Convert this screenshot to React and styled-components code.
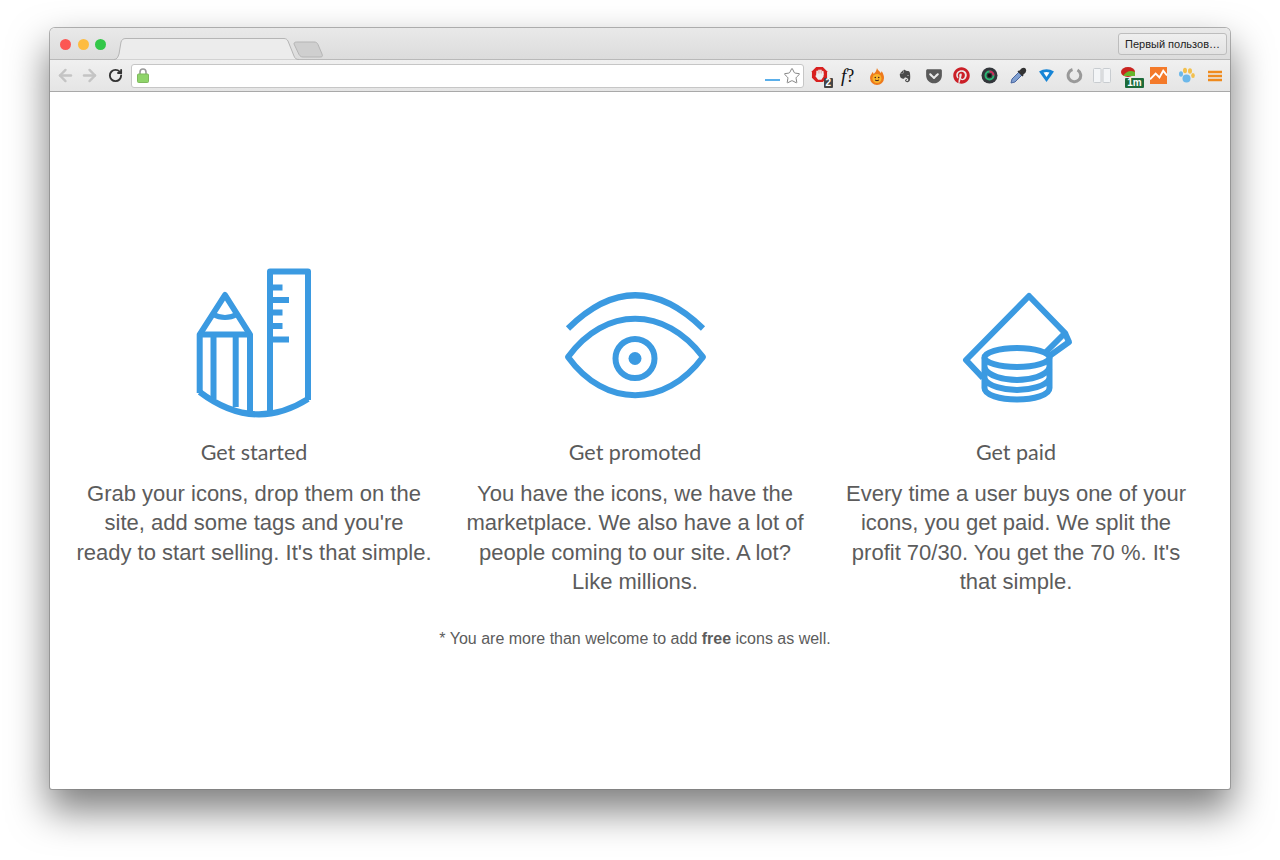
import React from "react";
import styled, { createGlobalStyle } from "styled-components";
import { ArrowLeft, ArrowRight, RotateCw, Star } from "lucide-react";
import { FaPinterest, FaEvernote, FaGetPocket } from "react-icons/fa";

const Global = createGlobalStyle`
  html, body { margin: 0; padding: 0; background: #fff; }
  body { width: 1280px; height: 860px; overflow: hidden; font-family: "Liberation Sans", Arial, sans-serif; }
`;

const Stage = styled.div`
  width: 1280px;
  height: 860px;
  padding: 28px 50px 0;
  box-sizing: border-box;
`;

const Browser = styled.div`
  height: 761px;
  display: flex;
  flex-direction: column;
  border-radius: 5px 5px 2px 2px;
  background: #fff;
  box-shadow: 0 0 0 1px rgba(120, 120, 120, 0.55), 0 20px 38px 2px rgba(0, 0, 0, 0.5);
`;

const TabStrip = styled.div`
  height: 32px;
  flex: none;
  display: flex;
  align-items: flex-end;
  padding-left: 10px;
  padding-right: 3px;
  background: linear-gradient(#e9e9e9, #dcdcdc);
  border-radius: 5px 5px 0 0;
  border-bottom: 1px solid #b9b9b9;
  box-sizing: border-box;
`;

const Lights = styled.div`
  display: flex;
  gap: 6.5px;
  align-self: flex-start;
  margin-top: 11px;
`;

const Light = styled.span`
  width: 11px;
  height: 11px;
  border-radius: 50%;
  background: ${(p) => p.$color};
`;

const TabShape = styled.svg`
  display: block;
  margin-left: 3px;
  margin-bottom: -1px;
  flex: none;
`;

const UserButton = styled.div`
  margin-left: auto;
  align-self: flex-start;
  margin-top: 5px;
  width: 109px;
  height: 22px;
  box-sizing: border-box;
  border: 1px solid #bdbdbd;
  border-radius: 3px;
  background: linear-gradient(#efefef, #e2e2e2);
  font-size: 11px;
  line-height: 20px;
  text-align: center;
  color: #222;
  white-space: nowrap;
`;

const Toolbar = styled.div`
  height: 32px;
  flex: none;
  display: flex;
  align-items: center;
  box-sizing: border-box;
  padding: 0 1px 0 3px;
  background: linear-gradient(#f0f0f0, #e5e5e5);
  border-bottom: 1px solid #a9a9a9;
`;

const NavButton = styled.div`
  width: 24px;
  display: flex;
  justify-content: center;
  margin-left: ${(p) => (p.$on ? "2px" : "0")};
  color: ${(p) => (p.$on ? "#333" : "#c4c4c4")};
`;

const Address = styled.div`
  margin-left: 4px;
  width: 673px;
  height: 24px;
  flex: none;
  box-sizing: border-box;
  display: flex;
  align-items: center;
  padding: 0 2px 0 5px;
  background: #fff;
  border: 1px solid #c6c6c6;
  border-radius: 3px;
`;

const UrlMark = styled.span`
  width: 15px;
  height: 2px;
  margin-left: auto;
  margin-right: 3px;
  margin-top: 9px;
  background: #5aafea;
`;

const Extensions = styled.div`
  display: flex;
  flex: 1;
  margin-left: 3px;
`;

const Ext = styled.div`
  position: relative;
  flex: 1;
  height: 24px;
  display: flex;
  align-items: center;
  justify-content: center;
`;

const FText = styled.span`
  font-family: "Liberation Serif", serif;
  font-size: 18px;
  color: #111;
  margin-right: 3px;
  i { font-size: 19px; }
`;

const Badge = styled.span`
  position: absolute;
  right: ${(p) => p.$right}px;
  bottom: 0;
  padding: 0 2px;
  font-size: 10px;
  line-height: 10px;
  font-weight: 700;
  color: #fff;
  background: ${(p) => p.$bg};
  border-radius: 1px;
`;

const Page = styled.main`
  flex: 1;
  display: flex;
  flex-direction: column;
  align-items: center;
  padding: 163px 10px 0 0;
`;

const Columns = styled.div`
  width: 1143px;
  display: grid;
  grid-template-columns: repeat(3, 381px);
`;

const Column = styled.section`
  display: flex;
  flex-direction: column;
  align-items: center;
  text-align: center;
`;

const IconBox = styled.svg`
  display: block;
  width: 150px;
  height: 170px;
  fill: none;
  stroke: #3b9ae1;
  stroke-width: 6;
  stroke-linejoin: round;
`;

const Title = styled.h2`
  margin: 9px 0 0;
  font-family: Lato, sans-serif;
  font-weight: 400;
  font-size: 21.5px;
  line-height: 36px;
  color: #5a5a5a;
`;

const Body = styled.p`
  margin: 9px 0 0;
  width: 357px;
  font-weight: 400;
  font-size: 22px;
  line-height: 29.3px;
  color: #5c5c5c;
`;

const Note = styled.p`
  margin: 31px 0 0;
  font-size: 16px;
  line-height: 24px;
  color: #5c5c5c;
`;

const PencilIcon = () => (
  <IconBox viewBox="180 255 150 170">
    <path d="M271 411V271.5H309V400" />
    <path d="M271 287.5H283.5M271 300H290M271 312.5H283.5M271 326H283.5M271 339.5H290" />
    <path d="M200.7 393V334.5L226 295L251 334.5V411" />
    <path d="M200.7 334.5H251M214.5 334.5V399M236.7 334.5V407" />
    <path d="M213.5 314Q226 321 238.5 314" strokeWidth="5" />
    <path d="M200.7 392Q255 433 309 399" />
  </IconBox>
);

const EyeIcon = () => (
  <IconBox viewBox="560 255 150 170" strokeWidth="6.500">
    <path d="M568 328.5Q635 262 703 328.5" />
    <path d="M568 357C605 306 665 306 703 357C665 408 605 408 568 357Z" />
    <circle cx="635" cy="358.5" r="19.500" />
    <circle cx="635" cy="358.5" r="6.500" fill="#3b9ae1" stroke="none" />
  </IconBox>
);

const MoneyIcon = () => (
  <IconBox viewBox="941 255 150 170">
    <path d="M983 378L966 360L1029 296L1065 333L1046 352" />
    <path d="M1065 333L1069 342L1048 357" />
    <ellipse cx="1017" cy="357.5" rx="32.500" ry="9.500" />
    <path d="M984.5 357.5V388C984.5 395 1000 399.5 1017 399.5C1034 399.5 1049.5 395 1049.5 388V357.5" />
    <path d="M984.5 368C988 376 1004 380 1017 380C1030 380 1046 376 1049.5 368" />
    <path d="M984.5 379C988 386 1004 390 1017 390C1030 390 1046 386 1049.5 379" />
  </IconBox>
);

const extensions = [
  {
    key: "adblock",
    badge: { text: "2", bg: "#444", right: 2 },
    node: (
      <svg width="17" height="17" viewBox="0 0 18 18" style={{ marginRight: 4, marginBottom: 3 }}>
        <path d="M5.5 1h7L17 5.5v7L12.5 17h-7L1 12.500v-7z" fill="#d8201f" />
        <path d="M6.500 9V5.500M8.500 9V4.500M10.500 9V4.500M12.500 9V6" stroke="#eee" strokeWidth="1.700" strokeLinecap="round" />
        <path d="M5.700 8H13.300V11L11 14.500H7.500L4.500 10.500L5.700 9.500z" fill="#eee" />
      </svg>
    ),
  },
  { key: "font", node: <FText><i>f</i>?</FText> },
  {
    key: "hola",
    node: (
      <svg width="16" height="18" viewBox="0 0 16 18">
        <path d="M8 1c1 3 3 3 3.500 5 1-.5 1-1.500 1-2 2 3 2.500 5 2.500 7a7 7 0 0 1-14 0c0-3 2-4 2.500-6 .5.500 1 1 1 2C6 6 7.500 4 8 1z" fill="#ee7a1c" />
        <circle cx="8" cy="11.500" r="4.500" fill="#f8b52d" />
        <circle cx="6.300" cy="10.500" r=".8" fill="#422" />
        <circle cx="9.700" cy="10.500" r=".8" fill="#422" />
        <path d="M6 13q2 1.500 4 0" stroke="#422" fill="none" />
      </svg>
    ),
  },
  { key: "evernote", node: <FaEvernote size={14} color="#4b4b4b" /> },
  { key: "pocket", node: <FaGetPocket size={18} color="#5a5a5a" /> },
  { key: "pinterest", node: <FaPinterest size={17} color="#cb1f27" /> },
  {
    key: "lens",
    node: (
      <svg width="17" height="17" viewBox="0 0 17 17">
        <circle cx="8.500" cy="8.500" r="8" fill="#33363b" />
        <circle cx="8.500" cy="8.500" r="4" fill="none" stroke="#2bb673" strokeWidth="2" />
        <path d="M8.500 4.500a4 4 0 0 1 4 4" fill="none" stroke="#d4285c" strokeWidth="2" />
        <circle cx="8.500" cy="8.500" r="1.800" fill="#111" />
      </svg>
    ),
  },
  {
    key: "dropper",
    node: (
      <svg width="17" height="17" viewBox="0 0 17 17">
        <path d="M1 16L2 12L9 5L12 8L5 15Z" fill="#7f9fd0" stroke="#4a66a0" />
        <path d="M8 4L13 9M10 4L12 2Q14 1 15 2Q16 3 15 5L13 7Z" fill="#333" stroke="#333" strokeWidth="1.500" />
      </svg>
    ),
  },
  {
    key: "vimeo",
    node: (
      <svg width="17" height="15" viewBox="0 0 17 15">
        <path d="M1 3.500Q8.500 -1 16 3.500L8.500 14z" fill="#1785d6" />
        <path d="M5.500 4.500Q8.500 3.500 11.500 4.500L8.500 9z" fill="#fff" />
      </svg>
    ),
  },
  {
    key: "ring",
    node: (
      <svg width="17" height="17" viewBox="0 0 17 17">
        <path d="M6.500 2.500A6.300 6.300 0 1 0 11.500 3" fill="none" stroke="#999" strokeWidth="3" />
      </svg>
    ),
  },
  {
    key: "reader",
    node: (
      <svg width="18" height="15" viewBox="0 0 18 15">
        <rect x="0.500" y="0.500" width="7.500" height="14" rx="1" fill="#f3f5f7" stroke="#c8ccd0" />
        <rect x="10" y="0.500" width="7.500" height="14" rx="1" fill="#f3f5f7" stroke="#c8ccd0" />
      </svg>
    ),
  },
  {
    key: "timer",
    badge: { text: "1m", bg: "#1c6b3a", right: 1 },
    node: (
      <svg width="16" height="16" viewBox="0 0 16 16" style={{ marginRight: 6, marginBottom: 4 }}>
        <ellipse cx="8" cy="6" rx="7" ry="5" fill="#c9231f" />
        <path d="M3 10q5-7 12-4v4z" fill="#67b52c" />
      </svg>
    ),
  },
  {
    key: "analytics",
    node: (
      <svg width="17" height="17" viewBox="0 0 18 18">
        <rect width="18" height="18" fill="#f47a2a" />
        <path d="M0 13L6 7l4 4 4-7 4 5" fill="none" stroke="#fff" strokeWidth="2" />
      </svg>
    ),
  },
  {
    key: "paw",
    node: (
      <svg width="17" height="17" viewBox="0 0 17 17">
        <ellipse cx="3" cy="7" rx="2" ry="2.800" fill="#6cb8ea" />
        <ellipse cx="7" cy="3.500" rx="2" ry="2.800" fill="#f2c04e" />
        <ellipse cx="12" cy="4" rx="2" ry="2.800" fill="#f2c04e" />
        <ellipse cx="15" cy="8.500" rx="1.800" ry="2.500" fill="#f2c04e" />
        <ellipse cx="8.500" cy="11.500" rx="4" ry="4" fill="#6cb8ea" />
      </svg>
    ),
  },
  {
    key: "menu",
    node: (
      <svg width="14" height="12" viewBox="0 0 14 12">
        <path d="M0 2h14M0 6h14M0 10h14" stroke="#ef8a1d" strokeWidth="2.400" />
      </svg>
    ),
  },
];

const features = [
  {
    title: "Get started",
    icon: <PencilIcon />,
    text: "Grab your icons, drop them on the site, add some tags and you're ready to start selling. It's that simple.",
  },
  {
    title: "Get promoted",
    icon: <EyeIcon />,
    text: "You have the icons, we have the marketplace. We also have a lot of people coming to our site. A lot? Like millions.",
  },
  {
    title: "Get paid",
    icon: <MoneyIcon />,
    text: "Every time a user buys one of your icons, you get paid. We split the profit 70/30. You get the 70 %. It's that simple.",
  },
];

export default function App() {
  return (
    <Stage>
      <Global />
      <Browser>
        <TabStrip>
          <Lights>
            <Light $color="#fc5753" />
            <Light $color="#fdbc40" />
            <Light $color="#33c748" />
          </Lights>
          <TabShape width="230" height="24" viewBox="0 0 230 24">
            <path d="M5 23.500C8 23.500 9 21 10 18L12 6C13 3.500 14 2.500 17 2.500H175C177 2.500 178 3.500 179 5L185 20C186 22.500 187 23.500 190 23.500" fill="#ececec" stroke="#b5b5b5" />
            <path d="M185 8C185 6.500 186 6 187.500 6H205C207 6 208 6.500 209 8.500L213 18C214 20.500 213 21 211 21H194C192 21 191 20 190 18.500Z" fill="#cfcfcf" stroke="#b5b5b5" />
          </TabShape>
          <UserButton>Первый пользов…</UserButton>
        </TabStrip>
        <Toolbar>
          <NavButton><ArrowLeft size={19} strokeWidth={3} /></NavButton>
          <NavButton><ArrowRight size={19} strokeWidth={3} /></NavButton>
          <NavButton $on><RotateCw size={15} strokeWidth={3} /></NavButton>
          <Address>
            <svg width="12" height="15" viewBox="0 0 12 15">
              <path d="M3 7V4a3 3 0 0 1 6 0v3" fill="none" stroke="#9a9a9a" strokeWidth="1.600" />
              <rect x="0.500" y="6" width="11" height="8.500" rx="1" fill="#8fd46a" stroke="#7fb95e" />
            </svg>
            <UrlMark />
            <Star size={18} strokeWidth={1.2} color="#777" fill="#fff" />
          </Address>
          <Extensions>
            {extensions.map((ext) => (
              <Ext key={ext.key}>
                {ext.node}
                {ext.badge && (
                  <Badge $bg={ext.badge.bg} $right={ext.badge.right}>
                    {ext.badge.text}
                  </Badge>
                )}
              </Ext>
            ))}
          </Extensions>
        </Toolbar>
        <Page>
          <Columns>
            {features.map((f) => (
              <Column key={f.title}>
                {f.icon}
                <Title>{f.title}</Title>
                <Body>{f.text}</Body>
              </Column>
            ))}
          </Columns>
          <Note>
            * You are more than welcome to add <b>free</b> icons as well.
          </Note>
        </Page>
      </Browser>
    </Stage>
  );
}
